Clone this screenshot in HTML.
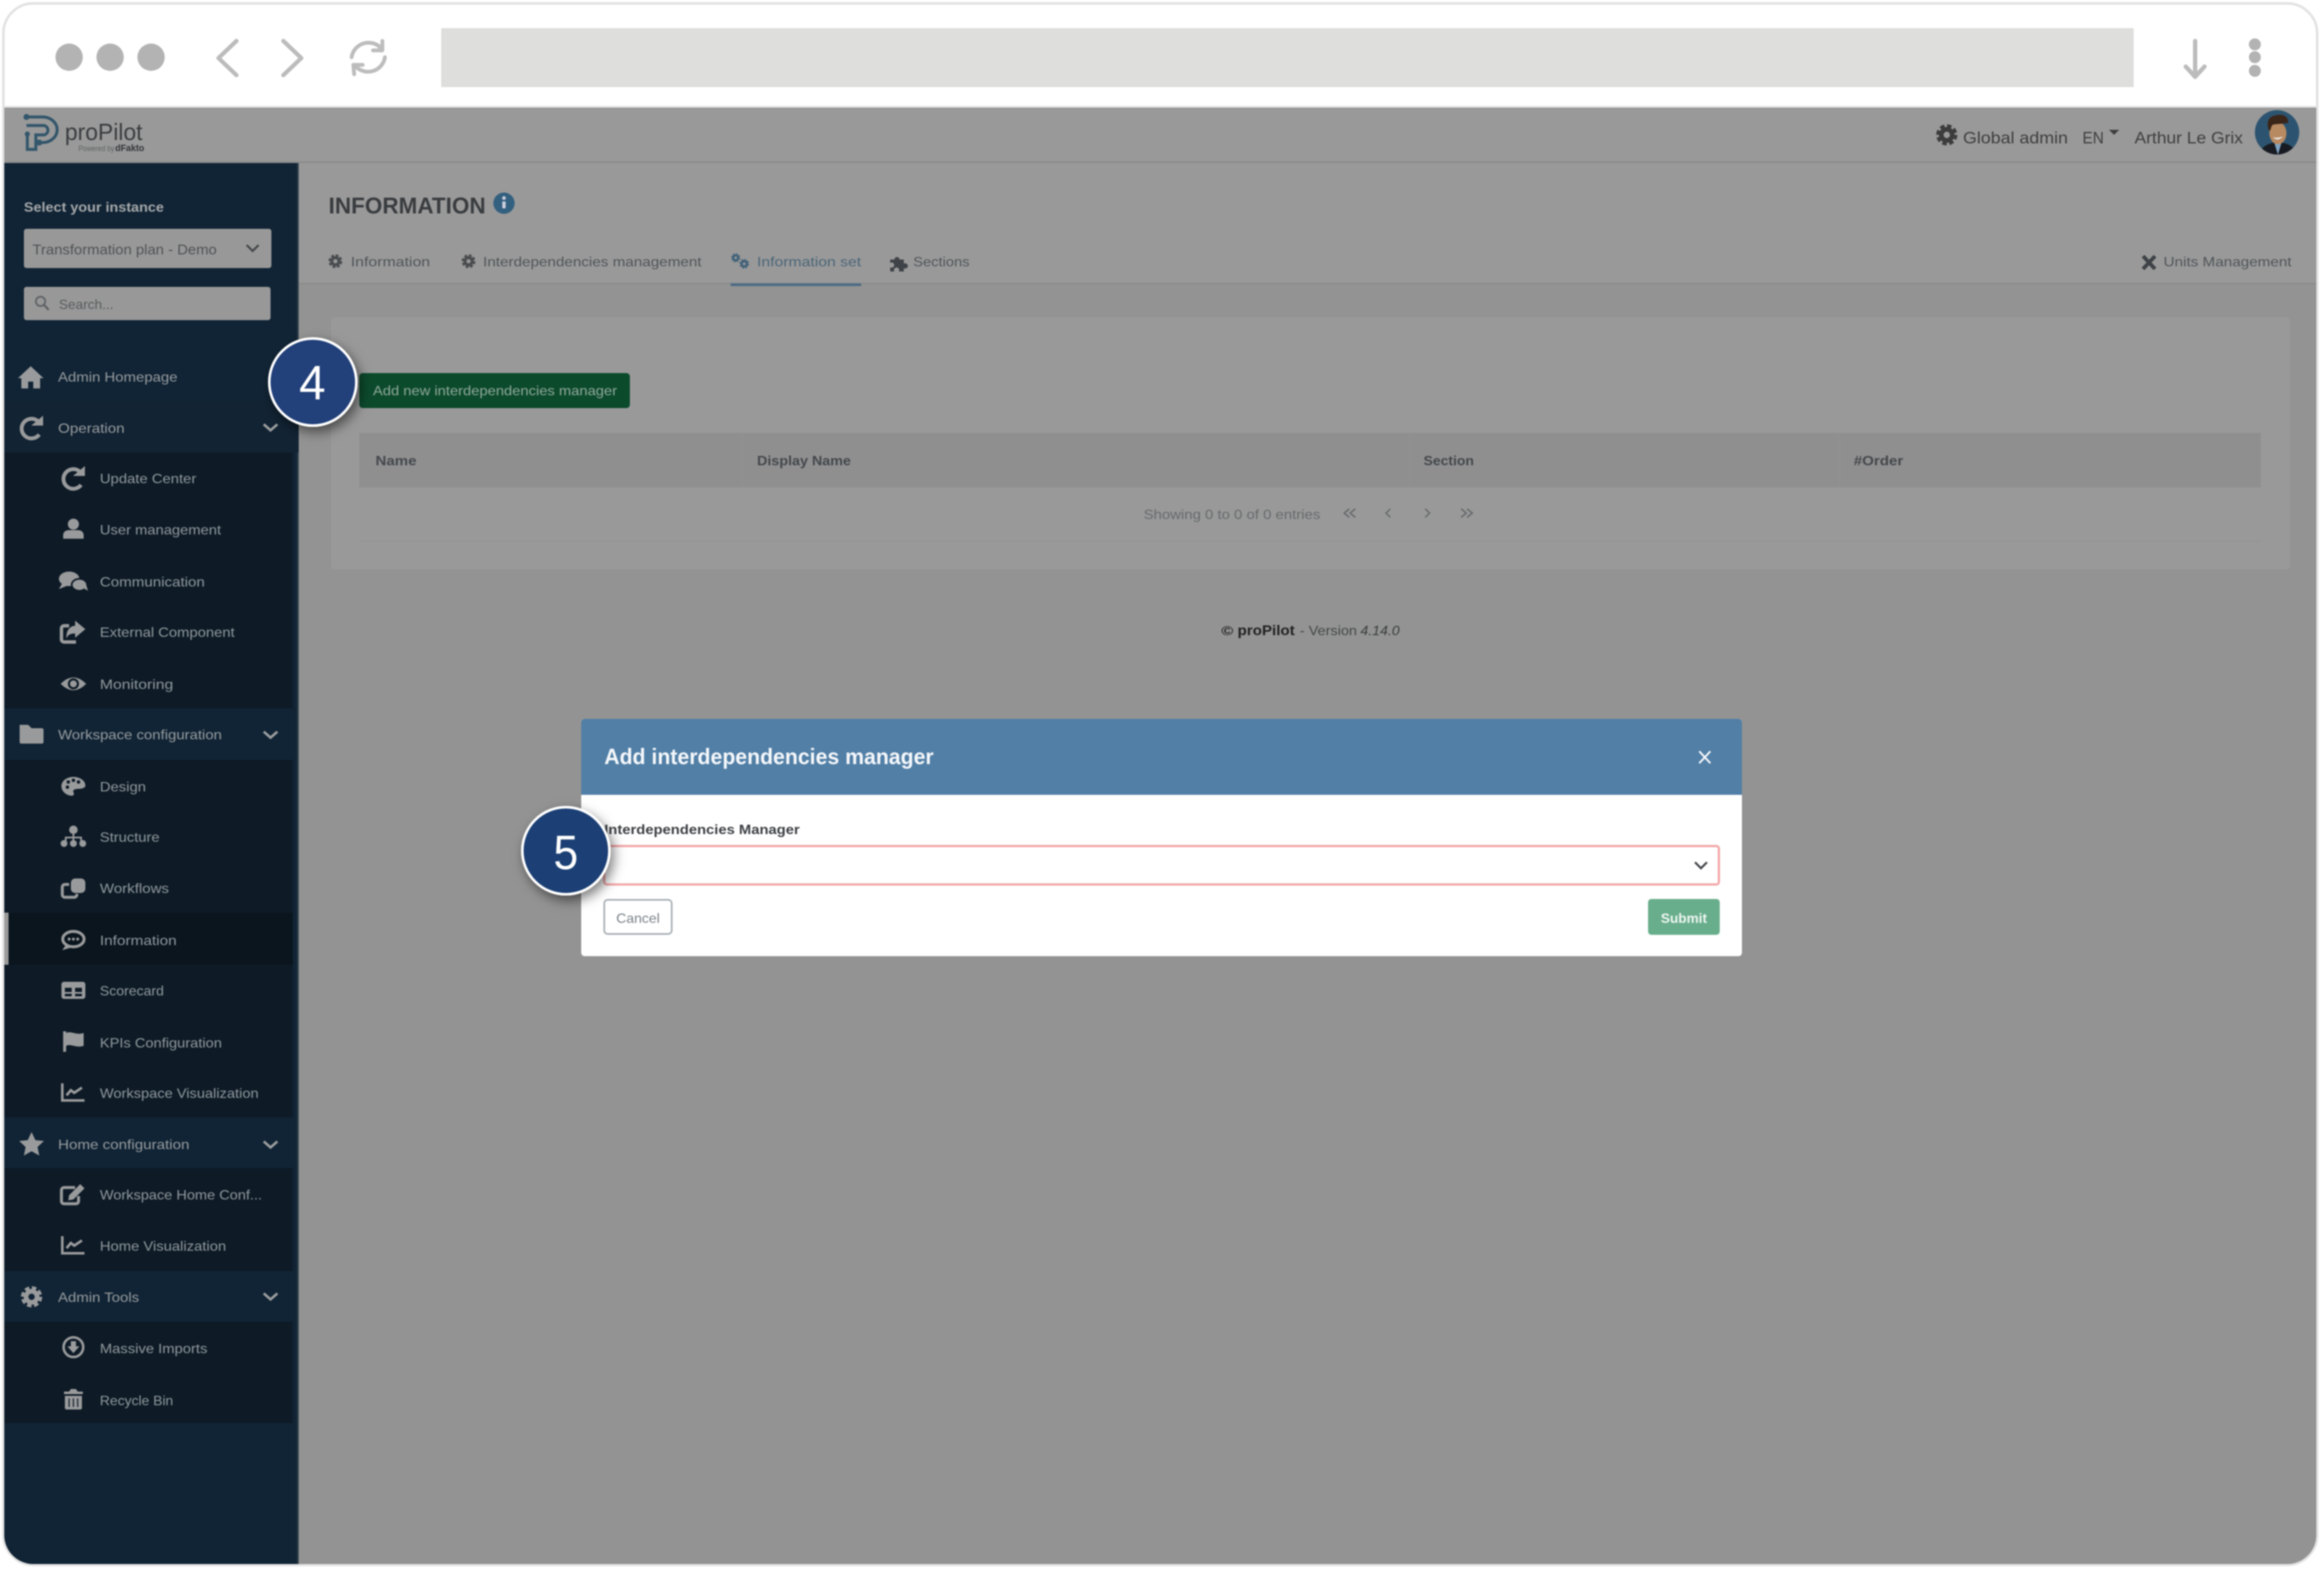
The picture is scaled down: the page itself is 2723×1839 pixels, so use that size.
<!DOCTYPE html>
<html lang="en">
<head>
<meta charset="utf-8">
<title>proPilot</title>
<style>
html,body{margin:0;padding:0;background:#fff;width:2723px;height:1839px;overflow:hidden}
svg{display:block;filter:blur(.75px)}
text{font-family:"Liberation Sans",sans-serif;dominant-baseline:alphabetic}
.s{font-size:16px;fill:#8f979b}
.t{font-size:16px;fill:#969b9e}
.h{font-size:19px;fill:#3f3f3f}
.tab{font-size:16px;fill:#50565a}
.th{font-size:16px;font-weight:bold;fill:#44484c}
.ic{color:#999a9b}
.tc{color:#45494c}
</style>
</head>
<body>
<svg xmlns="http://www.w3.org/2000/svg" width="2723" height="1839" viewBox="0 0 2723 1839">
<defs>
<clipPath id="frame"><rect x="5" y="5" width="2709" height="1827" rx="34"/></clipPath>
<g id="gear"><circle r="6.5" fill="none" stroke="currentColor" stroke-width="5.5"/><circle r="10.5" fill="none" stroke="currentColor" stroke-width="4" stroke-dasharray="5.2 3.05"/></g>
<g id="redo"><path d="M7-8A11.500 11.500 0 1 0 9 8" fill="none" stroke="currentColor" stroke-width="4.500"/><path d="M1-3H13V-13Z" fill="currentColor" stroke="currentColor" stroke-width="1"/></g>
<g id="user"><circle cy="-6" r="6.500" fill="currentColor"/><path d="M-12 11V7a6 6 0 0 1 6-6H6a6 6 0 0 1 6 6v4Z" fill="currentColor"/></g>
<g id="comments"><ellipse cx="-5" cy="-3" rx="12" ry="8.500" fill="currentColor"/><path d="M-13 2-17 9-7 5Z" fill="currentColor"/><ellipse cx="7" cy="4" rx="9" ry="7" fill="currentColor" stroke="#0e1b27" stroke-width="2"/><path d="M12 8 17 11 15 4Z" fill="currentColor"/></g>
<g id="share"><path d="M4 11H-10a3 3 0 0 1-3-3V-5a3 3 0 0 1 3-3H-4" fill="none" stroke="currentColor" stroke-width="4"/><path d="M3-14 15-4 3 6V1C-3 1-6 3-7 7-8-2-3-8 3-8Z" fill="currentColor"/></g>
<g id="eye"><path d="M-15 0Q0-15 15 0 0 15-15 0Z" fill="currentColor"/><circle r="6.500" fill="#0e1b27"/><circle r="4" fill="currentColor"/></g>
<g id="folder"><path d="M-14-11H-4L0-7H12a2 2 0 0 1 2 2V9a2 2 0 0 1-2 2H-12a2 2 0 0 1-2-2Z" fill="currentColor"/></g>
<g id="palette"><path d="M0-11C-8-11-14-6-14 0S-8 11-2 11C1 11 1 9 0 7-1 4 2 3 6 3 10 3 14 2 14-1 14-7 7-11 0-11Z" fill="currentColor"/><g fill="#0e1b27"><circle cx="-7" cy="1" r="2"/><circle cx="-6" cy="-5" r="2"/><circle cx="0" cy="-7" r="2"/><circle cx="6" cy="-5" r="2"/></g></g>
<g id="sitemap"><circle cy="-8" r="5" fill="currentColor"/><path d="M-9 7V1H9V7M0-5V7" fill="none" stroke="currentColor" stroke-width="2"/><circle cx="-11" cy="8" r="4" fill="currentColor"/><circle cy="8" r="4" fill="currentColor"/><circle cx="11" cy="8" r="4" fill="currentColor"/></g>
<g id="clone"><rect x="-3" y="-11" width="17" height="17" rx="5" fill="currentColor"/><path d="M-5-4H-10a3 3 0 0 0-3 3V8a3 3 0 0 0 3 3H1a3 3 0 0 0 3-3V7" fill="none" stroke="currentColor" stroke-width="3.500"/></g>
<g id="chat"><ellipse cy="-1" rx="12.500" ry="9" fill="none" stroke="currentColor" stroke-width="3.500"/><path d="M-9 6-13 12-3 9Z" fill="currentColor"/><circle cx="-5" cy="-1" r="1.700" fill="currentColor"/><circle cy="-1" r="1.700" fill="currentColor"/><circle cx="5" cy="-1" r="1.700" fill="currentColor"/></g>
<g id="table"><rect x="-14" y="-10" width="28" height="20" rx="3" fill="currentColor"/><path d="M-10-3H-2V2H-10ZM2-3H10V2H2ZM-10 4H-2V7H-10ZM2 4H10V7H2Z" fill="#0e1b27"/></g>
<g id="flag"><rect x="-12" y="-12" width="3.500" height="24" fill="currentColor"/><path d="M-8.500-10C-3-13 3-7 12-10V5C3 8-3 2-8.500 5Z" fill="currentColor"/></g>
<g id="chart"><path d="M-12-11V9H14" fill="none" stroke="currentColor" stroke-width="3"/><path d="M-7 3-2-3 2 0 11-6" fill="none" stroke="currentColor" stroke-width="3"/></g>
<g id="star"><path d="M0-14 4.500-4.500 14.500-3.500 7 3.500 9 13.500 0 8.500-9 13.500-7 3.500-14.500-3.500-4.500-4.500Z" fill="currentColor"/></g>
<g id="edit"><path d="M3-8H-10a3 3 0 0 0-3 3V8a3 3 0 0 0 3 3H4a3 3 0 0 0 3-3V2" fill="none" stroke="currentColor" stroke-width="3.500"/><path d="M-4 1 9-12 14-7 1 6-5 7Z" fill="currentColor"/></g>
<g id="down"><circle r="11.500" fill="none" stroke="currentColor" stroke-width="3"/><path d="M-3-7H3V-1H7L0 7-7-1H-3Z" fill="currentColor"/></g>
<g id="trash"><path d="M-11-9H-5L-3-12H3L5-9H11V-6H-11ZM-10-4H10V10a2 2 0 0 1-2 2H-8a2 2 0 0 1-2-2Z" fill="currentColor"/><path d="M-5-1V9M0-1V9M5-1V9" stroke="#0e1b27" stroke-width="1.300"/></g>
<g id="home"><path d="M0-13 15 1H11V13H3V5H-3V13H-11V1H-15Z" fill="currentColor"/></g>
<filter id="sh" x="-30%" y="-30%" width="170%" height="170%"><feDropShadow dx="4" dy="6" stdDeviation="7" flood-color="#000" flood-opacity=".5"/></filter>
</defs>

<!-- browser frame -->
<rect x="4" y="4" width="2711" height="1829" rx="35" fill="#fff" stroke="#e2e2e2" stroke-width="3"/>
<circle cx="81" cy="67" r="16" fill="#b3b3b3"/><circle cx="129" cy="67" r="16" fill="#b3b3b3"/><circle cx="177" cy="67" r="16" fill="#b3b3b3"/>
<path d="M277 48 256 68 277 88M332 48 353 68 332 88" fill="none" stroke="#bcbcbc" stroke-width="5" stroke-linecap="round" stroke-linejoin="round"/>
<path d="M412 67A20 20 0 0 1 447 57M451 67A20 20 0 0 1 416 77" fill="none" stroke="#bdbdbd" stroke-width="4.500" stroke-linecap="round"/>
<path d="M448 48V59H437M415 87 414 76H425" fill="none" stroke="#bdbdbd" stroke-width="4.500" stroke-linecap="round" stroke-linejoin="round"/>
<rect x="517" y="33" width="1983" height="69" fill="#dededc"/>
<path d="M2572 48V88M2561 78 2572 90 2583 78" fill="none" stroke="#bcbcbc" stroke-width="5" stroke-linecap="round" stroke-linejoin="round"/>
<circle cx="2642" cy="52" r="7" fill="#b3b3b3"/><circle cx="2642" cy="67" r="7" fill="#b3b3b3"/><circle cx="2642" cy="83" r="7" fill="#b3b3b3"/>

<g clip-path="url(#frame)">
<!-- app background -->
<rect x="5" y="126" width="2713" height="1710" fill="#929392"/>
<rect x="5" y="126" width="2713" height="64" fill="#999"/>
<rect x="5" y="124" width="2713" height="2" fill="#e6e6e6"/>
<rect x="350" y="191" width="2368" height="141" fill="#999"/>
<rect x="5" y="189" width="2713" height="2" fill="#8b8b8b"/>
<rect x="350" y="331" width="2368" height="2" fill="#8d8e8d"/>

<!-- sidebar -->
<rect x="5" y="191" width="345" height="1645" fill="#112435"/>
<rect x="348" y="191" width="2" height="1645" fill="#2b3c4a"/>
<rect x="5" y="471" width="345" height="59" fill="#122333"/>
<rect x="5" y="530" width="338" height="300" fill="#0e1b27"/>
<rect x="5" y="890" width="338" height="419" fill="#0e1b27"/>
<rect x="5" y="1368" width="338" height="121" fill="#0e1b27"/>
<rect x="5" y="1548" width="338" height="119" fill="#0e1b27"/>
<rect x="5" y="1069" width="338" height="61" fill="#0a151e"/>
<rect x="5" y="1069" width="5" height="61" fill="#9b9b9b"/>

<text x="28" y="248" font-size="16" font-weight="bold" fill="#a5a8aa" textLength="164" lengthAdjust="spacingAndGlyphs">Select your instance</text>
<rect x="28" y="268" width="290" height="46" rx="3" fill="#989898"/>
<text x="38" y="298" font-size="17" fill="#505356" textLength="216" lengthAdjust="spacingAndGlyphs">Transformation plan - Demo</text>
<path d="M289 287 296 294 303 287" fill="none" stroke="#45494c" stroke-width="2.500"/>
<rect x="28" y="336" width="289" height="39" rx="3" fill="#989898"/>
<circle cx="47.500" cy="353" r="5.500" fill="none" stroke="#5e6266" stroke-width="2"/><path d="M51.500 357 57 363" stroke="#5e6266" stroke-width="2.500"/>
<text x="69" y="362" font-size="16" fill="#585b5e" textLength="64" lengthAdjust="spacingAndGlyphs">Search...</text>

<!-- nav -->
<g class="ic">
<use href="#home" x="36" y="442"/>
<use href="#redo" x="37" y="501"/>
<use href="#redo" x="86" y="560"/>
<use href="#user" x="86" y="620"/>
<use href="#comments" x="86" y="681"/>
<use href="#share" x="85" y="741"/>
<use href="#eye" x="86" y="801"/>
<use href="#folder" x="37" y="860"/>
<use href="#palette" x="86" y="921"/>
<use href="#sitemap" x="86" y="980"/>
<use href="#clone" x="86" y="1040"/>
<use href="#chat" x="86" y="1101"/>
<use href="#table" x="86" y="1160"/>
<use href="#flag" x="86" y="1220"/>
<use href="#chart" x="85" y="1280"/>
<use href="#star" x="37" y="1340"/>
<use href="#edit" x="85" y="1399"/>
<use href="#chart" x="85" y="1459"/>
<use href="#gear" x="37" y="1519"/>
<use href="#down" x="86" y="1578"/>
<use href="#trash" x="86" y="1639"/>
</g>
<g>
<text class="t" x="68" y="447" textLength="140" lengthAdjust="spacingAndGlyphs">Admin Homepage</text>
<text class="t" x="68" y="507" textLength="78" lengthAdjust="spacingAndGlyphs">Operation</text>
<text class="s" x="117" y="566" textLength="113" lengthAdjust="spacingAndGlyphs">Update Center</text>
<text class="s" x="117" y="626" textLength="142" lengthAdjust="spacingAndGlyphs">User management</text>
<text class="s" x="117" y="687" textLength="123" lengthAdjust="spacingAndGlyphs">Communication</text>
<text class="s" x="117" y="746" textLength="158" lengthAdjust="spacingAndGlyphs">External Component</text>
<text class="s" x="117" y="807" textLength="86" lengthAdjust="spacingAndGlyphs">Monitoring</text>
<text class="t" x="68" y="866" textLength="192" lengthAdjust="spacingAndGlyphs">Workspace configuration</text>
<text class="s" x="117" y="927" textLength="54" lengthAdjust="spacingAndGlyphs">Design</text>
<text class="s" x="117" y="986" textLength="70" lengthAdjust="spacingAndGlyphs">Structure</text>
<text class="s" x="117" y="1046" textLength="81" lengthAdjust="spacingAndGlyphs">Workflows</text>
<text class="s" x="117" y="1107" textLength="90" lengthAdjust="spacingAndGlyphs">Information</text>
<text class="s" x="117" y="1166" textLength="75" lengthAdjust="spacingAndGlyphs">Scorecard</text>
<text class="s" x="117" y="1227" textLength="143" lengthAdjust="spacingAndGlyphs">KPIs Configuration</text>
<text class="s" x="117" y="1286" textLength="186" lengthAdjust="spacingAndGlyphs">Workspace Visualization</text>
<text class="t" x="68" y="1346" textLength="154" lengthAdjust="spacingAndGlyphs">Home configuration</text>
<text class="s" x="117" y="1405" textLength="190" lengthAdjust="spacingAndGlyphs">Workspace Home Conf...</text>
<text class="s" x="117" y="1465" textLength="148" lengthAdjust="spacingAndGlyphs">Home Visualization</text>
<text class="t" x="68" y="1525" textLength="95" lengthAdjust="spacingAndGlyphs">Admin Tools</text>
<text class="s" x="117" y="1585" textLength="126" lengthAdjust="spacingAndGlyphs">Massive Imports</text>
<text class="s" x="117" y="1646" textLength="86" lengthAdjust="spacingAndGlyphs">Recycle Bin</text>
</g>
<g fill="none" stroke="#9a9c9d" stroke-width="3">
<path d="M309 497 317 504 325 497M309 857 317 864 325 857M309 1337 317 1344 325 1337M309 1515 317 1522 325 1515"/>
</g>

<!-- logo -->
<g fill="none" stroke="#33566b" stroke-width="3.500">
<path d="M33 137H50A17 15 0 0 1 50 167H47"/>
<path d="M31 147H52A7 6 0 0 1 52 158H42V175H32V157"/>
</g>
<g fill="#33566b"><circle cx="31" cy="137" r="3.500"/><circle cx="46" cy="167" r="3.500"/><circle cx="32" cy="157" r="3"/></g>
<text x="76" y="164" font-size="28" fill="#3b3d40" textLength="91" lengthAdjust="spacingAndGlyphs">proPilot</text>
<text x="92" y="177" font-size="9" fill="#5e6062" textLength="42" lengthAdjust="spacingAndGlyphs">Powered by</text>
<text x="135" y="177" font-size="11" font-weight="bold" fill="#333538" textLength="34" lengthAdjust="spacingAndGlyphs">dFakto</text>

<!-- top right -->
<use href="#gear" x="2281" y="158" color="#3c3c3c"/>
<text class="h" x="2300" y="168" textLength="123" lengthAdjust="spacingAndGlyphs">Global admin</text>
<text class="h" x="2440" y="168" textLength="25" lengthAdjust="spacingAndGlyphs">EN</text>
<path d="M2471 152H2483L2477 158Z" fill="#3f3f3f"/>
<text class="h" x="2501" y="168" textLength="127" lengthAdjust="spacingAndGlyphs">Arthur Le Grix</text>
<circle cx="2668" cy="155" r="26" fill="#2c5470"/>
<clipPath id="av"><circle cx="2668" cy="155" r="26"/></clipPath>
<g clip-path="url(#av)">
<path d="M2647 181C2650 170 2660 167 2669 167 2678 167 2688 170 2691 181Z" fill="#181c22"/>
<path d="M2665 168H2673L2669 181Z" fill="#7fa3c4"/>
<ellipse cx="2669" cy="156" rx="10" ry="13" fill="#b78a62"/>
<path d="M2658 152C2655 141 2659 136 2667 135 2674 133 2682 136 2681 144 2677 145 2668 145 2663 146 2661 148 2661 150 2660 153Z" fill="#3b2519"/>
<path d="M2663 161Q2669 166 2675 160Q2669 162 2663 161Z" fill="#eee"/>
</g>

<!-- page title and tabs -->
<text x="385" y="250" font-size="27" font-weight="bold" fill="#3a3d40" textLength="184" lengthAdjust="spacingAndGlyphs">INFORMATION</text>
<circle cx="590.500" cy="238" r="12.500" fill="#33607f"/>
<rect x="588.500" y="236" width="4" height="8" fill="#ccd"/><circle cx="590.500" cy="232" r="2.200" fill="#ccd"/>

<use href="#gear" transform="translate(393 306) scale(.65)" color="#4a4d50"/>
<text class="tab" x="411" y="312" textLength="93" lengthAdjust="spacingAndGlyphs">Information</text>
<use href="#gear" transform="translate(549 306) scale(.65)" color="#4a4d50"/>
<text class="tab" x="566" y="312" textLength="256" lengthAdjust="spacingAndGlyphs">Interdependencies management</text>
<use href="#gear" transform="translate(862 302) scale(.42)" color="#3e5f78"/>
<use href="#gear" transform="translate(872 309) scale(.45)" color="#3e5f78"/>
<text class="tab" x="887" y="312" style="fill:#4b6678" textLength="122" lengthAdjust="spacingAndGlyphs">Information set</text>
<rect x="856" y="332" width="153" height="3" fill="#4a6a85"/>
<path d="M1043 304H1048A3 3 0 1 1 1054 304H1059V309A3 3 0 1 1 1059 314V318H1053A3 3 0 1 0 1048 318H1043V313A3 3 0 1 0 1043 308Z" fill="#3f4347"/>
<text class="tab" x="1070" y="312" textLength="66" lengthAdjust="spacingAndGlyphs">Sections</text>
<path d="M2511 300 2525 315M2525 300 2511 315" stroke="#3f4347" stroke-width="4.500"/>
<text class="tab" x="2535" y="312" textLength="150" lengthAdjust="spacingAndGlyphs">Units Management</text>

<!-- card -->
<rect x="387" y="371" width="2297" height="297" rx="5" fill="#999" stroke="#939393" stroke-width="2"/>
<rect x="421" y="437" width="317" height="41" rx="4" fill="#0c4a2c"/>
<text x="437" y="463" font-size="16" fill="#8fa898" textLength="286" lengthAdjust="spacingAndGlyphs">Add new interdependencies manager</text>
<rect x="421" y="507" width="2228" height="64" fill="#8f8f90"/>
<rect x="869" y="507" width="1" height="64" fill="#929293"/>
<rect x="1651" y="507" width="1" height="64" fill="#929293"/>
<rect x="2155" y="507" width="1" height="64" fill="#929293"/>
<text class="th" x="440" y="545" textLength="48" lengthAdjust="spacingAndGlyphs">Name</text>
<text class="th" x="887" y="545" textLength="110" lengthAdjust="spacingAndGlyphs">Display Name</text>
<text class="th" x="1668" y="545" textLength="59" lengthAdjust="spacingAndGlyphs">Section</text>
<text class="th" x="2172" y="545" textLength="58" lengthAdjust="spacingAndGlyphs">#Order</text>
<rect x="421" y="633" width="2228" height="2" fill="#959595"/>
<text x="1340" y="608" font-size="16" fill="#676a6c" textLength="207" lengthAdjust="spacingAndGlyphs">Showing 0 to 0 of 0 entries</text>
<g fill="none" stroke="#686b6d" stroke-width="1.800">
<path d="M1581 596 1575 601 1581 606M1588 596 1582 601 1588 606M1629 596 1624 601 1629 606M1670 596 1675 601 1670 606M1712 596 1718 601 1712 606M1719 596 1725 601 1719 606"/>
</g>
<text x="1431" y="744" font-size="15" font-weight="bold" fill="#222" textLength="14" lengthAdjust="spacingAndGlyphs">©</text>
<text x="1450" y="744" font-size="17" font-weight="bold" fill="#222" textLength="67" lengthAdjust="spacingAndGlyphs">proPilot</text>
<text x="1523" y="744" font-size="16" fill="#45484a" textLength="67" lengthAdjust="spacingAndGlyphs">- Version</text>
<text x="1594" y="744" font-size="16" font-style="italic" fill="#3b3e40" textLength="46" lengthAdjust="spacingAndGlyphs">4.14.0</text>

<!-- modal -->
<rect x="681" y="842" width="1360" height="278" rx="4" fill="#fff"/>
<path d="M681 931V846a4 4 0 0 1 4-4H2037a4 4 0 0 1 4 4V931Z" fill="#527fa6"/>
<text x="708" y="895" font-size="26" font-weight="bold" fill="#f4f7fa" textLength="386" lengthAdjust="spacingAndGlyphs">Add interdependencies manager</text>
<path d="M1991 880 2004 894M2004 880 1991 894" stroke="#f4f7fa" stroke-width="2.200"/>
<text x="708" y="977" font-size="16" font-weight="bold" fill="#3d4145" textLength="229" lengthAdjust="spacingAndGlyphs">Interdependencies Manager</text>
<rect x="708" y="991" width="1306" height="45" rx="3" fill="#fff" stroke="#f4a3a3" stroke-width="2.500"/>
<path d="M1986 1010 1993 1017 2000 1010" fill="none" stroke="#45494d" stroke-width="2.500"/>
<rect x="708" y="1054" width="79" height="40" rx="4" fill="#fff" stroke="#a9b0b6" stroke-width="2"/>
<text x="722" y="1081" font-size="16" fill="#7b838a" textLength="51" lengthAdjust="spacingAndGlyphs">Cancel</text>
<rect x="1931" y="1053" width="84" height="42" rx="4" fill="#69ae8c"/>
<text x="1946" y="1081" font-size="16" font-weight="bold" fill="#eef6f2" textLength="54" lengthAdjust="spacingAndGlyphs">Submit</text>
</g>

<!-- badges -->
<circle cx="366.500" cy="447.500" r="51" fill="#20407a" stroke="#fff" stroke-width="3" filter="url(#sh)"/>
<text x="366" y="468" font-size="57" fill="#fff" text-anchor="middle" textLength="31" lengthAdjust="spacingAndGlyphs">4</text>
<circle cx="663" cy="996.500" r="51" fill="#1f3f75" stroke="#fff" stroke-width="3" filter="url(#sh)"/>
<text x="663" y="1018" font-size="57" fill="#fff" text-anchor="middle" textLength="29" lengthAdjust="spacingAndGlyphs">5</text>
</svg>
</body>
</html>
